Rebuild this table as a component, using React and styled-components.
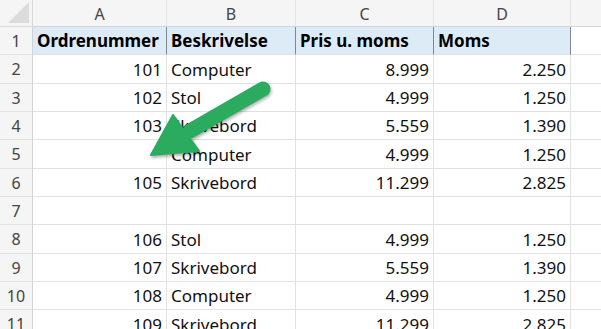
import React from 'react';
import styled, { createGlobalStyle } from 'styled-components';

const GlobalStyle = createGlobalStyle`
  html, body {
    margin: 0;
    padding: 0;
    background: #ffffff;
    overflow: hidden;
  }
  * {
    box-sizing: border-box;
  }
`;

const columns = ['A', 'B', 'C', 'D', ''];

const rows = [
  { header: true, cells: ['Ordrenummer', 'Beskrivelse', 'Pris u. moms', 'Moms'] },
  { cells: ['101', 'Computer', '8.999', '2.250'] },
  { cells: ['102', 'Stol', '4.999', '1.250'] },
  { cells: ['103', 'Skrivebord', '5.559', '1.390'] },
  { cells: ['', 'Computer', '4.999', '1.250'] },
  { cells: ['105', 'Skrivebord', '11.299', '2.825'] },
  { cells: ['', '', '', ''] },
  { cells: ['106', 'Stol', '4.999', '1.250'] },
  { cells: ['107', 'Skrivebord', '5.559', '1.390'] },
  { cells: ['108', 'Computer', '4.999', '1.250'] },
  { cells: ['109', 'Skrivebord', '11.299', '2.825'] },
];

// column B holds text, the rest are numbers
const alignFor = (i) => (i === 1 ? 'left' : 'right');

const App = () => {
  return (
    <>
      <GlobalStyle />
      <Sheet>
        <Grid>
          <Corner />
          {columns.map((c, i) => (
            <ColHead key={'h' + i}>{c}</ColHead>
          ))}
          {rows.map((row, r) => (
            <React.Fragment key={r}>
              <RowHead>{r + 1}</RowHead>
              {row.cells.map((v, i) =>
                row.header ? (
                  <HeadCell key={i}>{v}</HeadCell>
                ) : (
                  <Cell key={i} $align={alignFor(i)}>
                    {v}
                  </Cell>
                )
              )}
              <Cell />
            </React.Fragment>
          ))}
        </Grid>
        <Arrow viewBox="0 0 601 329" width="601" height="329">
          <g fill="#2aab5e" stroke="#2aab5e" strokeLinejoin="round">
            <line
              x1="263"
              y1="89"
              x2="190"
              y2="131"
              strokeWidth="15"
              strokeLinecap="round"
            />
            <polygon points="151,155 173,115 199,151" strokeWidth="2" />
          </g>
        </Arrow>
      </Sheet>
    </>
  );
};

const Sheet = styled.div`
  position: relative;
  width: 601px;
  height: 329px;
  overflow: hidden;
  font-family: 'Noto Sans', 'Liberation Sans', sans-serif;
`;

const Grid = styled.div`
  display: grid;
  grid-template-columns: 33px 134px 129px 138px 137px 60px;
  grid-template-rows: 27px repeat(11, 28.33px);
`;

const Corner = styled.div`
  position: relative;
  background: #f5f5f5;
  border-right: 1px solid #d9d9d9;
  border-bottom: 1px solid #d9d9d9;

  &::after {
    content: '';
    position: absolute;
    right: 3px;
    bottom: 3px;
    width: 21px;
    height: 21px;
    background: #dcdcdc;
    clip-path: polygon(100% 0, 100% 100%, 0 100%);
  }
`;

const ColHead = styled.div`
  display: flex;
  align-items: center;
  justify-content: center;
  background: #f5f5f5;
  border-right: 1px solid #e3e3e3;
  border-bottom: 1px solid #d4d4d4;
  color: #444444;
  font-size: 16px;
  padding-top: 1px;
`;

const RowHead = styled.div`
  display: flex;
  align-items: center;
  justify-content: center;
  background: #f5f5f5;
  border-right: 1px solid #d4d4d4;
  border-bottom: 1px solid #e3e3e3;
  color: #444444;
  font-size: 16px;
  padding-top: 1px;
`;

const Cell = styled.div`
  display: flex;
  align-items: flex-end;
  justify-content: ${(p) => (p.$align === 'right' ? 'flex-end' : 'flex-start')};
  padding: 0 4px 2px 4px;
  border-right: 1px solid #e1e1e1;
  border-bottom: 1px solid #e1e1e1;
  color: #111111;
  font-size: 17px;
  white-space: nowrap;
  overflow: visible;
`;

const HeadCell = styled(Cell)`
  justify-content: flex-start;
  background: #ddebf7;
  border-right: 1px solid #7d8896;
  font-weight: 700;
  color: #000000;
`;

const Arrow = styled.svg`
  position: absolute;
  left: 0;
  top: 0;
  pointer-events: none;
  filter: drop-shadow(1px 2px 1.5px rgba(0, 0, 0, 0.3));
`;

export default App;
